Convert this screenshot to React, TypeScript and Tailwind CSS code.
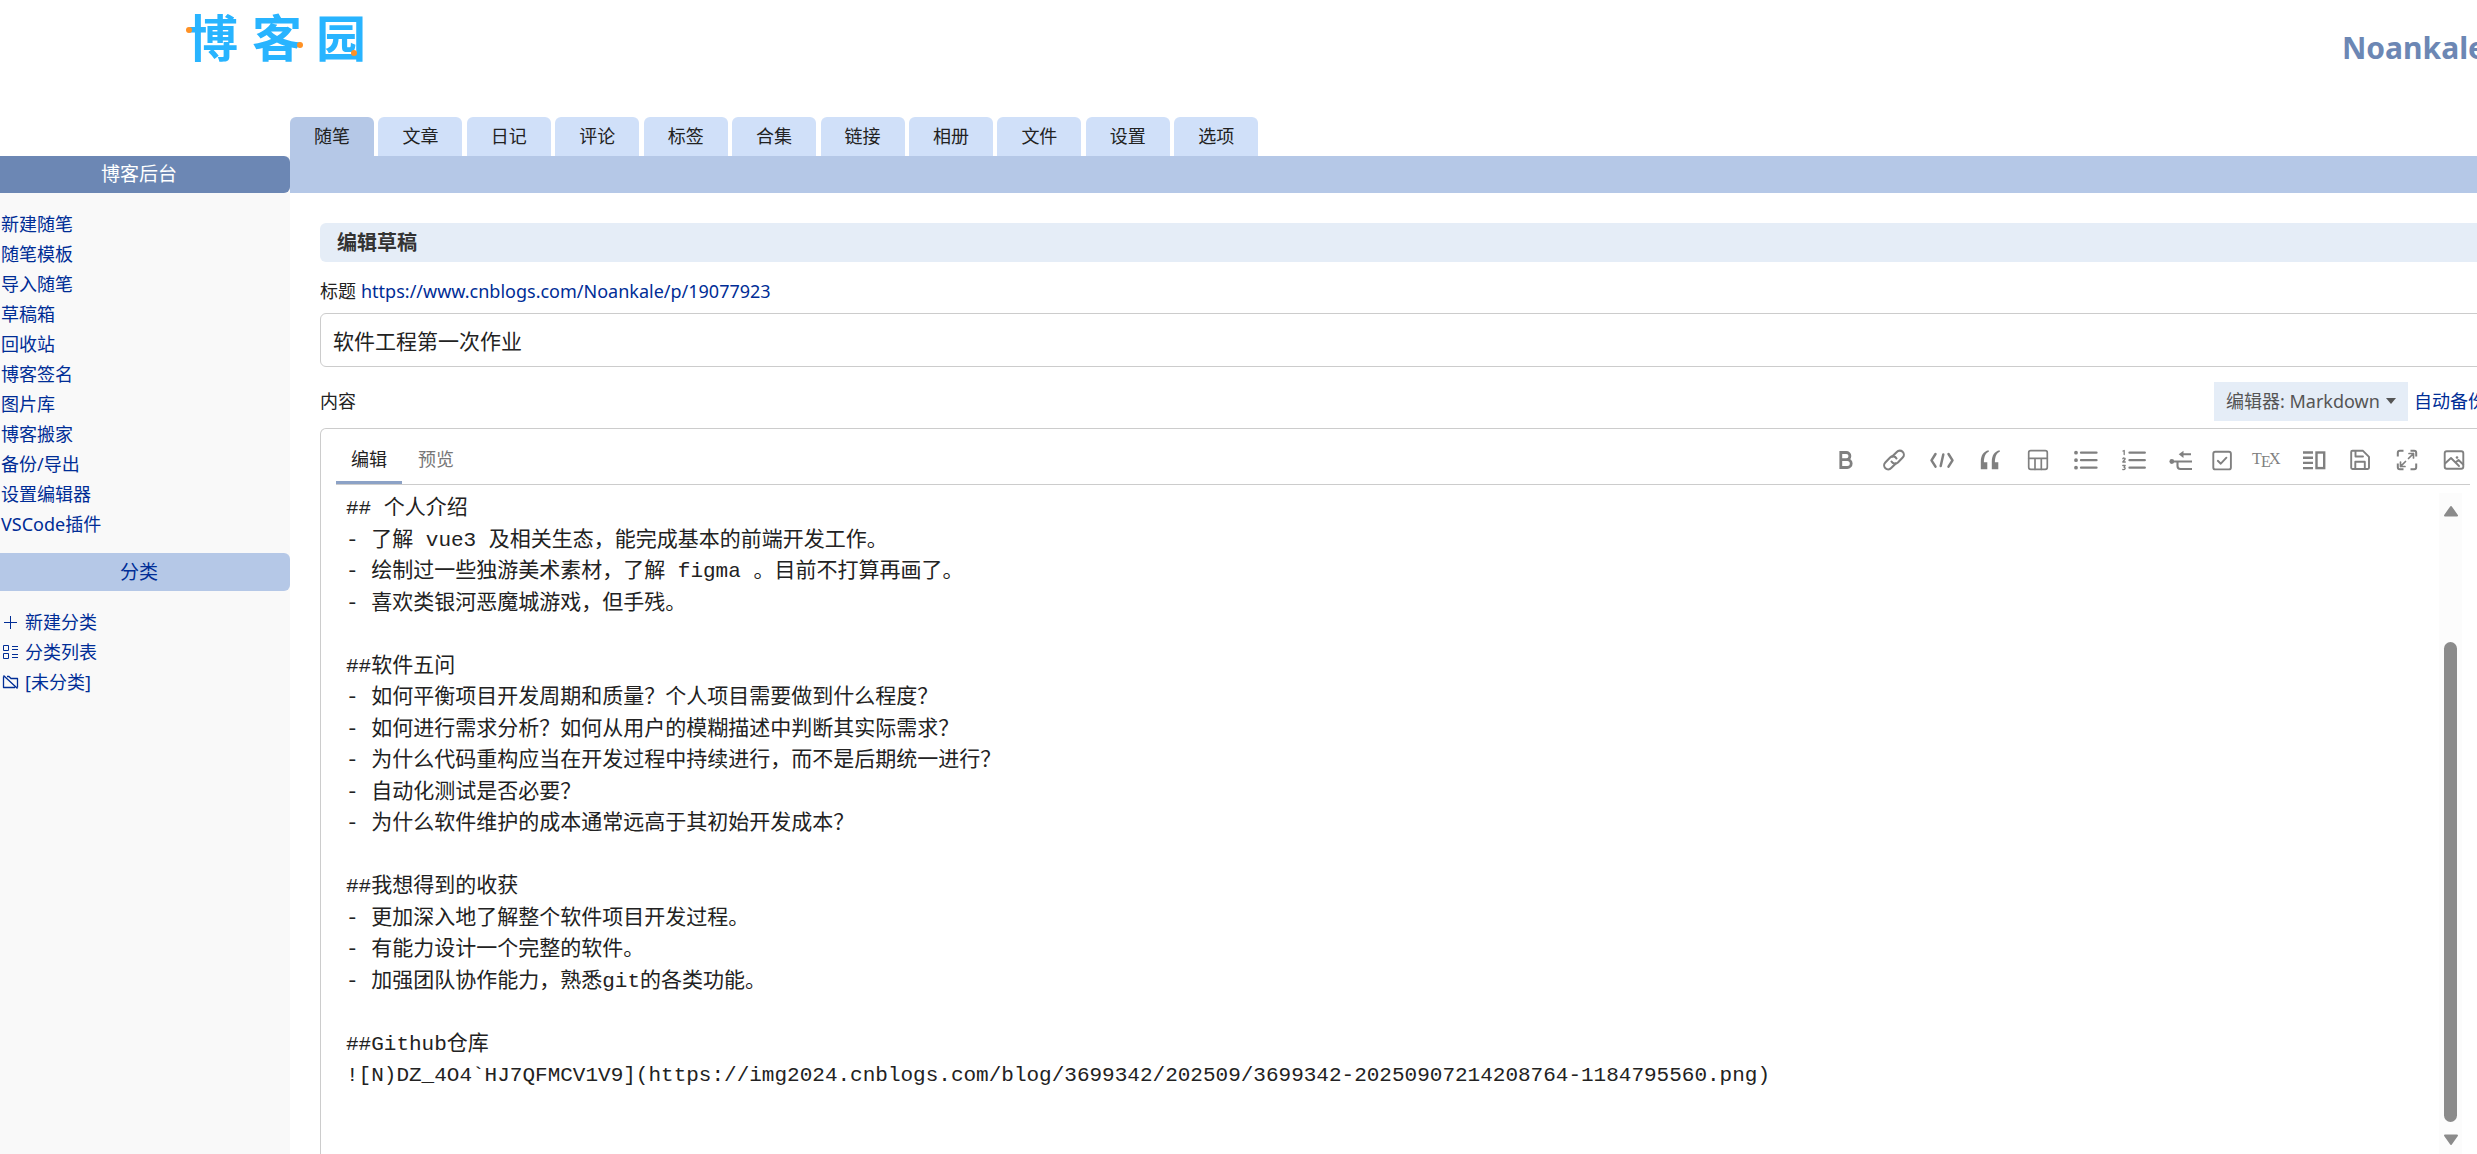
import React, { useState } from "react";

interface NavLinkProps {
	title: string;
	icon?: React.ReactNode;
}

interface ToolProps {
	title: string;
	width: string;
	icon: React.ReactNode;
}

const tabs = ["随笔", "文章", "日记", "评论", "标签", "合集", "链接", "相册", "文件", "设置", "选项"];

const adminLinks = ["新建随笔", "随笔模板", "导入随笔", "草稿箱", "回收站", "博客签名", "图片库", "博客搬家", "备份/导出", "设置编辑器", "VSCode插件"];

const draft = `## 个人介绍
- 了解 vue3 及相关生态，能完成基本的前端开发工作。
- 绘制过一些独游美术素材，了解 figma 。目前不打算再画了。
- 喜欢类银河恶魔城游戏，但手残。

##软件五问
- 如何平衡项目开发周期和质量？个人项目需要做到什么程度？
- 如何进行需求分析？如何从用户的模糊描述中判断其实际需求？
- 为什么代码重构应当在开发过程中持续进行，而不是后期统一进行？
- 自动化测试是否必要？
- 为什么软件维护的成本通常远高于其初始开发成本？

##我想得到的收获
- 更加深入地了解整个软件项目开发过程。
- 有能力设计一个完整的软件。
- 加强团队协作能力，熟悉git的各类功能。

##Github仓库
![N)DZ_4O4\`HJ7QFMCV1V9](https://img2024.cnblogs.com/blog/3699342/202509/3699342-20250907214208764-1184795560.png)`;

const Icon: React.FC<{ children: React.ReactNode; strokeWidth?: number }> = (props) => (
	<svg width="24" height="24" viewBox="0 0 24 24" fill="none" stroke="currentColor" strokeWidth={props.strokeWidth || 1.9} strokeLinecap="round" strokeLinejoin="round" aria-hidden="true">
		{props.children}
	</svg>
);

const tools: Array<ToolProps> = [
	{
		title: "粗体",
		width: "w-12",
		icon: (
			<Icon strokeWidth={2.8}>
				<path d="M6.800 4.500h5.500a3.500 3.500 0 0 1 0 7.200h-5.500zM6.800 11.700h6.500a3.900 3.900 0 0 1 0 7.800h-6.500z" strokeLinejoin="miter" />
			</Icon>
		),
	},
	{
		title: "链接",
		width: "w-12",
		icon: (
			<Icon strokeWidth={2.1}>
				<path d="M10.200 8.600l4.600-4.700a4.100 4.100 0 0 1 5.900 5.700l-4.800 4.900a4.100 4.100 0 0 1-6.400-.9" />
				<path d="M13.800 15.400l-4.600 4.700a4.100 4.100 0 0 1-5.900-5.700l4.800-4.900a4.100 4.100 0 0 1 6.400.9" />
			</Icon>
		),
	},
	{
		title: "代码",
		width: "w-12",
		icon: (
			<Icon strokeWidth={2.5}>
				<path d="M5.500 6l-4 6.300 4 6.300M18.500 6l4 6.300-4 6.300M13.300 6.500l-2.600 11.500" />
			</Icon>
		),
	},
	{
		title: "引用",
		width: "w-12",
		icon: (
			<svg width="24" height="24" viewBox="0 0 24 24" fill="currentColor" aria-hidden="true">
				<path d="M2.800 21.200v-7.600C2.800 7.500 5.500 3.500 10.500 2.300l.5 1.100C7.600 5 6 8.500 5.900 14.200h3.400v7zM13.800 21.200v-7.600c0-6.100 2.700-10.100 7.700-11.300l.5 1.100c-3.400 1.600-5 5.100-5.100 10.800h3.400v7z" />
			</svg>
		),
	},
	{
		title: "表格",
		width: "w-12",
		icon: (
			<Icon strokeWidth={1.7}>
				<rect x="2.700" y="2.700" width="18.600" height="18.600" rx="2" />
				<path d="M2.700 10.300h18.600M9 10.300v11M15.300 10.300v11" />
			</Icon>
		),
	},
	{
		title: "无序列表",
		width: "w-12",
		icon: (
			<Icon strokeWidth={2.3}>
				<path d="M7 4.700h15.500M7 12.200h15.500M7 19.700h15.500" />
				<path d="M2 4.700h.01M2 12.200h.01M2 19.700h.01" strokeWidth="3.800" />
			</Icon>
		),
	},
	{
		title: "有序列表",
		width: "w-12",
		icon: (
			<Icon strokeWidth={2.3}>
				<path d="M7.500 4.700h15.300M7.500 12.200h15.300M7.500 19.700h15.300" />
				<path d="M1 3l1.200-.5v4M.8 10.700c.5-1 2.500-.9 2.300.3L.8 14h2.500M.8 17.500h2.400l-1.200 1.800c1.700 0 1.700 2.500-1.200 2.200" strokeWidth="1.300" />
			</Icon>
		),
	},
	{
		title: "缩进",
		width: "w-[46px]",
		icon: (
			<Icon strokeWidth={2.1}>
				<path d="M2.500 13.500h20.500M8.500 13.500v4.500q0 3 3 3h11.500M12.500 6.300h9.500" strokeLinecap="butt" />
				<path d="M2.800 13.500h.01" strokeWidth="4.800" />
				<path d="M14.500 2.700v7.200l-4.800-3.600z" fill="currentColor" stroke="none" />
			</Icon>
		),
	},
	{
		title: "任务列表",
		width: "w-9",
		icon: (
			<Icon>
				<rect x="3.300" y="3.800" width="17.600" height="17.600" rx="2" />
				<path d="M7.800 12.800l3 2.900 5.600-6" />
			</Icon>
		),
	},
	{
		title: "公式",
		width: "w-[52px]",
		icon: (
			<svg width="30" height="24" viewBox="0 0 30 24" fill="currentColor" className="font-['Liberation_Serif',serif] text-[16px]" aria-hidden="true">
				<text x="1" y="16">
					T
				</text>
				<text x="10" y="19">
					E
				</text>
				<text x="18" y="16">
					X
				</text>
			</svg>
		),
	},
	{
		title: "分栏",
		width: "w-11",
		icon: (
			<Icon strokeWidth={2.4}>
				<path d="M1 4.500h10M1 9.700h10M1 14.900h10M1 20.100h10" strokeLinecap="butt" />
				<rect x="14.500" y="4.500" width="7.700" height="15.600" strokeLinejoin="miter" />
			</Icon>
		),
	},
	{
		title: "保存",
		width: "w-12",
		icon: (
			<Icon>
				<path d="M3.200 4q0-1.200 1.200-1.200h10.600l6 6v11q0 1.200-1.200 1.200h-15.400q-1.200 0-1.200-1.200z" />
				<path d="M7.500 3v5.500h7.500M7.300 21v-7.300h9.500v7.300" />
			</Icon>
		),
	},
	{
		title: "全屏",
		width: "w-[46px]",
		icon: (
			<Icon strokeWidth={2}>
				<path d="M8.500 2.800h-3.700q-2 0-2 2v3.700M15.500 2.800h3.700q2 0 2 2v3.700M8.500 21.200h-3.700q-2 0-2-2v-3.700M15.500 21.200h3.700q2 0 2-2v-3.700" strokeLinecap="butt" />
				<path d="M13.500 10.500l5-5M14 5.500h4.500v4.500M10.500 13.500l-5 5M5.500 14v4.500h4.500" strokeWidth="1.700" />
			</Icon>
		),
	},
	{
		title: "图片",
		width: "w-12",
		icon: (
			<Icon>
				<rect x="2.700" y="3.200" width="18.600" height="17.600" rx="2" />
				<path d="M3 15.500l6-5.500 8 8M13.500 14.500l3-2.500 4.700 4.500" />
				<path d="M15 9.500h.01" strokeWidth="2.600" />
			</Icon>
		),
	},
];

const PlusIcon = () => (
	<svg width="17" height="17" viewBox="0 0 17 17" fill="none" stroke="currentColor" aria-hidden="true">
		<path d="M2 8.500h13M8.500 2v13" />
	</svg>
);

const CategoryListIcon = () => (
	<svg width="17" height="17" viewBox="0 0 17 17" fill="none" stroke="currentColor" aria-hidden="true">
		<path d="M1.500 1.500h5v5h-5zM1.500 9.500h5v5h-5zM10 2.500h6M10 5.500h6M10 10.500h6M10 13.500h6" />
	</svg>
);

const FolderOffIcon = () => (
	<svg width="17" height="17" viewBox="0 0 17 17" fill="none" stroke="currentColor" strokeWidth="1.300" strokeLinejoin="round" aria-hidden="true">
		<path d="M1.500 2.500v11h11.500M5 2.500h2l2 2h6.500v9M1.500 1.500l14 13" />
	</svg>
);

const Logo: React.FC = () => (
	<a href="#" className="relative flex gap-[14px] pl-[188px] pt-2 text-[50px] font-bold leading-[60px] text-[#28b4ff]">
		<span>博</span>
		<span>客</span>
		<span>园</span>
		<svg width="190" height="72" viewBox="0 0 190 72" fill="#ff9124" className="absolute left-[180px] top-0" aria-hidden="true">
			<circle cx="9" cy="30" r="3" />
			<circle cx="120" cy="45" r="3" />
			<circle cx="174" cy="53" r="3" />
		</svg>
	</a>
);

const NavLink: React.FC<NavLinkProps> = (props) => (
	<li>
		<a href="#" className="flex items-center gap-[6px] hover:underline">
			{props.icon}
			{props.title}
		</a>
	</li>
);

const Sidebar: React.FC = () => (
	<aside className="w-[290px] shrink-0 bg-[#f9f9f9] text-[18px] leading-[30px] text-[#002d96]">
		<h2 className="rounded-r-md bg-[#6c87b4] pr-3 text-center text-[19px] leading-[37px] text-white">博客后台</h2>
		<ul className="px-px pb-[14px] pt-4">
			{adminLinks.map((title) => (
				<NavLink key={title} title={title} />
			))}
		</ul>
		<h2 className="rounded-r-md bg-[#b5c8e7] pr-3 text-center text-[19px] leading-[38px]">分类</h2>
		<ul className="px-[2px] pt-4">
			<NavLink title="新建分类" icon={<PlusIcon />} />
			<NavLink title="分类列表" icon={<CategoryListIcon />} />
			<NavLink title="[未分类]" icon={<FolderOffIcon />} />
		</ul>
	</aside>
);

const Scrollbar: React.FC = () => (
	<div className="flex w-[23px] shrink-0 flex-col items-center bg-[#fcfcfc] text-[#8b8b8b]" aria-hidden="true">
		<svg width="16" height="12" viewBox="0 0 16 12" className="mt-3 shrink-0" fill="currentColor" stroke="currentColor" strokeWidth="2" strokeLinejoin="round">
			<path d="M8 2l6 8.500h-12z" />
		</svg>
		<div className="flex w-[13px] flex-1 flex-col py-3">
			<div className="flex-[1_1_19%]"></div>
			<div className="flex-[1_1_81%] rounded-full bg-[#8b8b8b]"></div>
		</div>
		<svg width="16" height="12" viewBox="0 0 16 12" className="mb-2 shrink-0" fill="currentColor" stroke="currentColor" strokeWidth="2" strokeLinejoin="round">
			<path d="M8 10l6-8.500h-12z" />
		</svg>
	</div>
);

const Editor: React.FC = () => {
	const [content, setContent] = useState(draft);
	const [mode, setMode] = useState("edit");

	return (
		<section className="flex flex-1 flex-col rounded-t-md border border-b-0 border-[#ccc]">
			<div className="mx-[15px] flex h-14 items-stretch justify-between border-b border-[#ccc]">
				<div className="flex gap-px text-[18px]">
					<button
						type="button"
						onClick={() => setMode("edit")}
						className={`border-b-3 px-[15px] pt-2 ${mode === "edit" ? "border-[#8ca2c6] text-[#222]" : "border-transparent text-[#777]"}`}
					>
						编辑
					</button>
					<button
						type="button"
						onClick={() => setMode("preview")}
						className={`border-b-3 px-[15px] pt-2 ${mode === "preview" ? "border-[#8ca2c6] text-[#222]" : "border-transparent text-[#777]"}`}
					>
						预览
					</button>
				</div>
				<div className="-mr-2 flex items-center pt-[6px] text-[#808080]">
					{tools.map((tool) => (
						<button key={tool.title} type="button" aria-label={tool.title} className={`flex shrink-0 justify-center ${tool.width}`}>
							{tool.icon}
						</button>
					))}
				</div>
			</div>
			<div className="flex flex-1 pr-[23px] pt-2">
				<textarea
					id="post-body"
					value={content}
					onChange={(e) => setContent(e.target.value)}
					spellCheck={false}
					className="flex-1 resize-none overflow-hidden pl-[25px] font-['Liberation_Mono','Noto_Sans_CJK_SC',monospace] text-[21px] leading-normal text-[#222] outline-none"
				/>
				<Scrollbar />
			</div>
		</section>
	);
};

export default function App() {
	const [title, setTitle] = useState("软件工程第一次作业");
	const [activeTab, setActiveTab] = useState("随笔");

	return (
		<div className="flex min-h-screen flex-col overflow-hidden bg-white font-['Noto_Sans','Noto_Sans_CJK_SC',sans-serif] text-[#222]">
			<header className="-mr-[9px] flex h-[117px] items-start justify-between">
				<Logo />
				<a href="#" className="pt-7 text-[30px] font-bold leading-[40px] text-[#6c87b4]">
					Noankale
				</a>
			</header>
			<nav className="pl-[290px] text-[17px] leading-[39px]">
				{tabs.map((tab) => (
					<React.Fragment key={tab}>
						<a
							href="#"
							onClick={() => setActiveTab(tab)}
							className={`inline-block rounded-t-md px-6 align-top text-[18px] ${activeTab === tab ? "bg-[#b5c8e7]" : "bg-[#d0e0f9]"}`}
						>
							{tab}
						</a>{" "}
					</React.Fragment>
				))}
			</nav>
			<div className="flex flex-1">
				<Sidebar />
				<div className="flex min-w-0 flex-1 flex-col">
					<div className="h-[37px] bg-[#b5c8e7]"></div>
					<main className="-mr-[9px] flex flex-1 flex-col pl-[30px] pt-[30px] text-[18px]">
						<h1 className="rounded-md bg-[#e5edf7] pl-[17px] text-[20px] font-bold leading-[39px] text-[#333]">编辑草稿</h1>
						<div className="flex gap-[5px] pb-[7px] pt-[15px] leading-[29px]">
							<label htmlFor="post-title">标题</label>
							<a href="#" className="text-[#002d96]">
								https://www.cnblogs.com/Noankale/p/19077923
							</a>
						</div>
						<input
							id="post-title"
							value={title}
							onChange={(e) => setTitle(e.target.value)}
							className="h-[54px] rounded-md border border-[#ccc] px-3 text-[21px] outline-none"
						/>
						<div className="flex items-center justify-between pb-[7px] pt-[15px]">
							<label htmlFor="post-body">内容</label>
							<div className="flex items-center gap-[6px]">
								<div className="relative text-[#555]">
									<select aria-label="编辑器" className="h-[39px] appearance-none bg-[#e5edf7] pl-3 pr-7 outline-none">
										<option>编辑器: Markdown</option>
										<option>编辑器: TinyMCE</option>
									</select>
									<svg width="10" height="6" viewBox="0 0 10 6" fill="currentColor" className="pointer-events-none absolute right-3 top-4" aria-hidden="true">
										<path d="M0 0h10l-5 6z" />
									</svg>
								</div>
								<a href="#" className="text-[#002d96]">
									自动备份
								</a>
							</div>
						</div>
						<Editor />
					</main>
				</div>
			</div>
		</div>
	);
}
